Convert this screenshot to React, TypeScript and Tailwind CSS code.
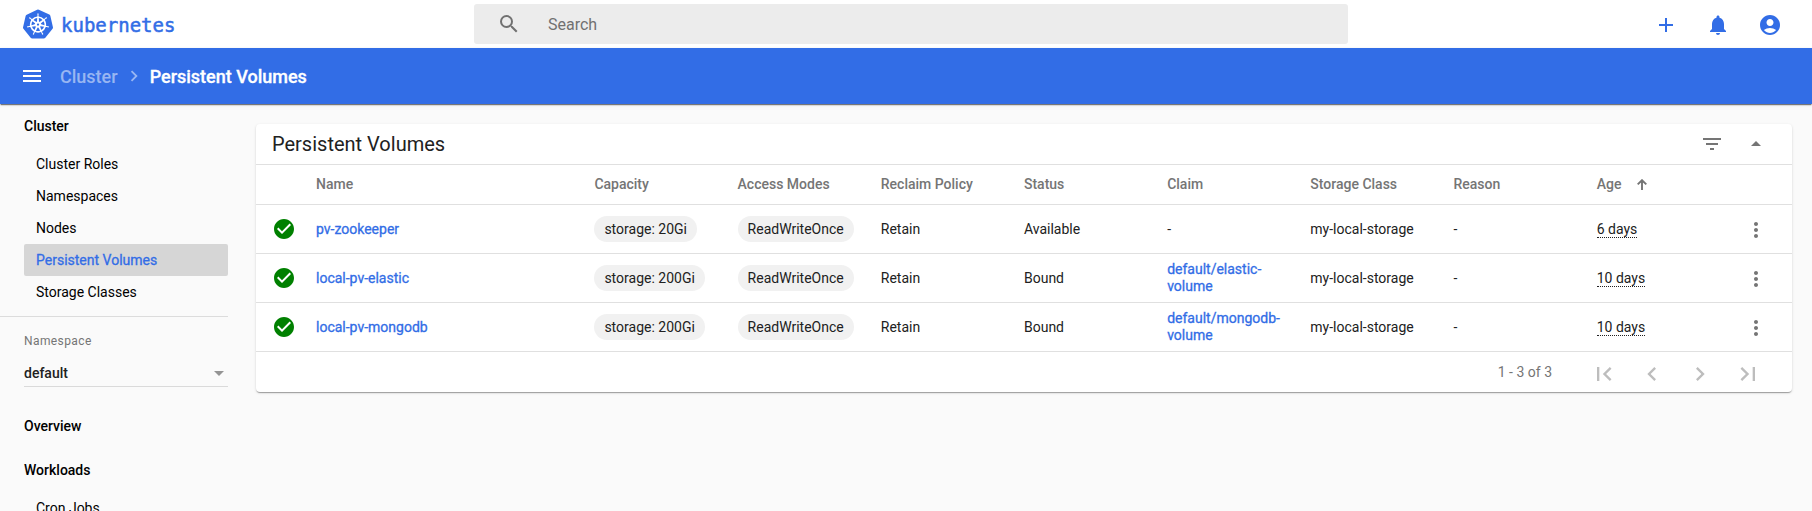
import React from 'react';
import {
  MdSearch, MdAdd, MdNotifications, MdAccountCircle, MdMenu, MdChevronRight, MdChevronLeft,
  MdCheckCircle, MdMoreVert, MdFilterList, MdArrowDropUp, MdFirstPage, MdLastPage,
} from 'react-icons/md';
import { SiKubernetes } from 'react-icons/si';

const rows = [
  { name: 'pv-zookeeper', capacity: 'storage: 20Gi', status: 'Available', claim: null, age: '6 days' },
  { name: 'local-pv-elastic', capacity: 'storage: 200Gi', status: 'Bound', claim: 'default/elastic-volume', age: '10 days' },
  { name: 'local-pv-mongodb', capacity: 'storage: 200Gi', status: 'Bound', claim: 'default/mongodb-volume', age: '10 days' },
];

const columns = ['Name', 'Capacity', 'Access Modes', 'Reclaim Policy', 'Status', 'Claim', 'Storage Class', 'Reason'];
const resources = ['Cluster Roles', 'Namespaces', 'Nodes', 'Persistent Volumes', 'Storage Classes'];
const grid =
  'grid grid-cols-[60px_278.4px_repeat(8,143.2px)_32px] items-center border-b border-[#e0e0e0]';
const link = 'text-[#326de6] [-webkit-text-stroke:0.3px_#326de6]';

function Chip({ children }: { children: React.ReactNode }) {
  return (
    <span className="flex h-[26px] w-fit items-center rounded-full bg-[#f1f1f1] px-2.5">{children}</span>
  );
}

function TopBar() {
  return (
    <header className="flex h-12 shrink-0 items-center bg-white">
      <div className="flex w-[474px] items-center pl-[23px] text-[#326de6]">
        <SiKubernetes size={30} />
        <span className="ml-2 pt-px font-['DejaVu_Sans_Mono',monospace] text-[19px] leading-[30px] [-webkit-text-stroke:0.5px_#326de6]">
          kubernetes
        </span>
      </div>
      <div className="flex h-10 w-[874px] items-center rounded-[3px] bg-[#ececec] pl-[23px] text-[#717171]">
        <MdSearch size={24} />
        <span className="ml-[27px] pt-0.5 text-base">Search</span>
      </div>
      <div className="ml-auto flex gap-7 pt-0.5 pr-[30px] text-[#326de6]">
        <MdAdd size={24} />
        <MdNotifications size={24} />
        <MdAccountCircle size={24} />
      </div>
    </header>
  );
}

function Breadcrumbs() {
  return (
    <div className="flex h-14 shrink-0 items-center bg-[#326de6] pl-5 text-[18px] font-medium text-white shadow-[0_2px_1px_-1px_rgba(0,0,0,0.4),0_1px_1px_rgba(0,0,0,0.14),0_1px_3px_rgba(0,0,0,0.12)]">
      <MdMenu size={24} />
      <span className="ml-4 text-white/50">Cluster</span>
      <MdChevronRight size={22} className="mr-[5px] ml-[5px] text-white/50" />
      <span className="[-webkit-text-stroke:0.3px_#ffffff]">Persistent Volumes</span>
    </div>
  );
}

function Sidebar() {
  return (
    <nav className="w-[228px] shrink-0 text-sm text-black">
      <div className="flex h-11 items-center pl-6 font-medium">Cluster</div>
      <div className="pl-6">
        {resources.map((r) => (
          <div
            key={r}
            className={
              r === 'Persistent Volumes'
                ? 'flex h-8 items-center rounded-[2px] bg-[#d6d6d6] pl-3 text-[#326de6] [-webkit-text-stroke:0.3px_#326de6]'
                : 'flex h-8 items-center pl-3'
            }
          >
            {r}
          </div>
        ))}
      </div>
      <div className="mt-2 border-t border-[#dcdcdc]" />
      <div className="ml-6 h-[70px] border-b border-[#dadada] pt-4">
        <div className="text-xs leading-4 tracking-[0.4px] text-[#757575]">Namespace</div>
        <div className="mt-3.5 flex items-center justify-between pr-1 leading-5 font-medium text-[#212121]">
          default
          <svg width="10" height="5" viewBox="0 0 10 5" fill="#949494"><path d="M0 0h10L5 5z" /></svg>
        </div>
      </div>
      <div className="mt-[17px] flex h-11 items-center pl-6 font-medium">Overview</div>
      <div className="flex h-11 items-center pl-6 font-medium">Workloads</div>
      <div className="flex h-8 items-center pl-9">Cron Jobs</div>
    </nav>
  );
}

function VolumesCard() {
  return (
    <section className="mt-5 ml-7 h-[268px] w-[1536px] rounded bg-white text-sm text-[#212121] shadow-[0_2px_1px_-1px_rgba(0,0,0,0.2),0_1px_1px_rgba(0,0,0,0.14),0_1px_3px_rgba(0,0,0,0.12)]">
      <div className="flex h-[41px] items-center border-b border-[#e0e0e0] pr-6 pl-4">
        <h1 className="text-xl leading-10">Persistent Volumes</h1>
        <MdFilterList size={24} className="ml-auto text-[#757575]" />
        <MdArrowDropUp size={24} className="ml-5 text-[#757575]" />
      </div>
      <div className={`${grid} h-10 pb-px font-medium text-[#757575]`}>
        <span />
        {columns.map((c) => (
          <span key={c}>{c}</span>
        ))}
        <span className="flex items-center">
          Age
          <svg width="10" height="11" viewBox="0 0 10 11" className="ml-4" fill="none" stroke="currentColor" strokeWidth="1.9">
            <path d="M5 11V1.4M0.7 5.4L5 1.2l4.3 4.2" />
          </svg>
        </span>
      </div>
      {rows.map((r) => (
        <div key={r.name} className={`${grid} h-[49px]`}>
          <MdCheckCircle size={24} className="ml-4 text-[#008000]" />
          <span className={link}>{r.name}</span>
          <span><Chip>{r.capacity}</Chip></span>
          <span><Chip>ReadWriteOnce</Chip></span>
          <span>Retain</span>
          <span>{r.status}</span>
          <span className={r.claim ? `pr-6 leading-[17px] ${link}` : ''}>{r.claim ?? '-'}</span>
          <span>my-local-storage</span>
          <span>-</span>
          <span><span className="border-b border-dotted border-[#212121] leading-none">{r.age}</span></span>
          <MdMoreVert size={24} className="mt-0.5 ml-1 text-[#757575]" />
        </div>
      ))}
      <div className="flex h-[41px] items-center justify-end pr-[30px] text-[#bdbdbd]">
        <span className="mr-[38px] pb-0.5 text-sm text-[#757575]">1 - 3 of 3</span>
        <div className="flex gap-5 pt-0.5">
          <MdFirstPage size={28} />
          <MdChevronLeft size={28} />
          <MdChevronRight size={28} />
          <MdLastPage size={28} />
        </div>
      </div>
    </section>
  );
}

export default function App() {
  return (
    <div className="flex h-[511px] w-[1812px] flex-col overflow-hidden bg-[#fafafa] font-[Roboto,sans-serif]">
      <TopBar />
      <Breadcrumbs />
      <main className="flex items-start">
        <Sidebar />
        <VolumesCard />
      </main>
    </div>
  );
}
